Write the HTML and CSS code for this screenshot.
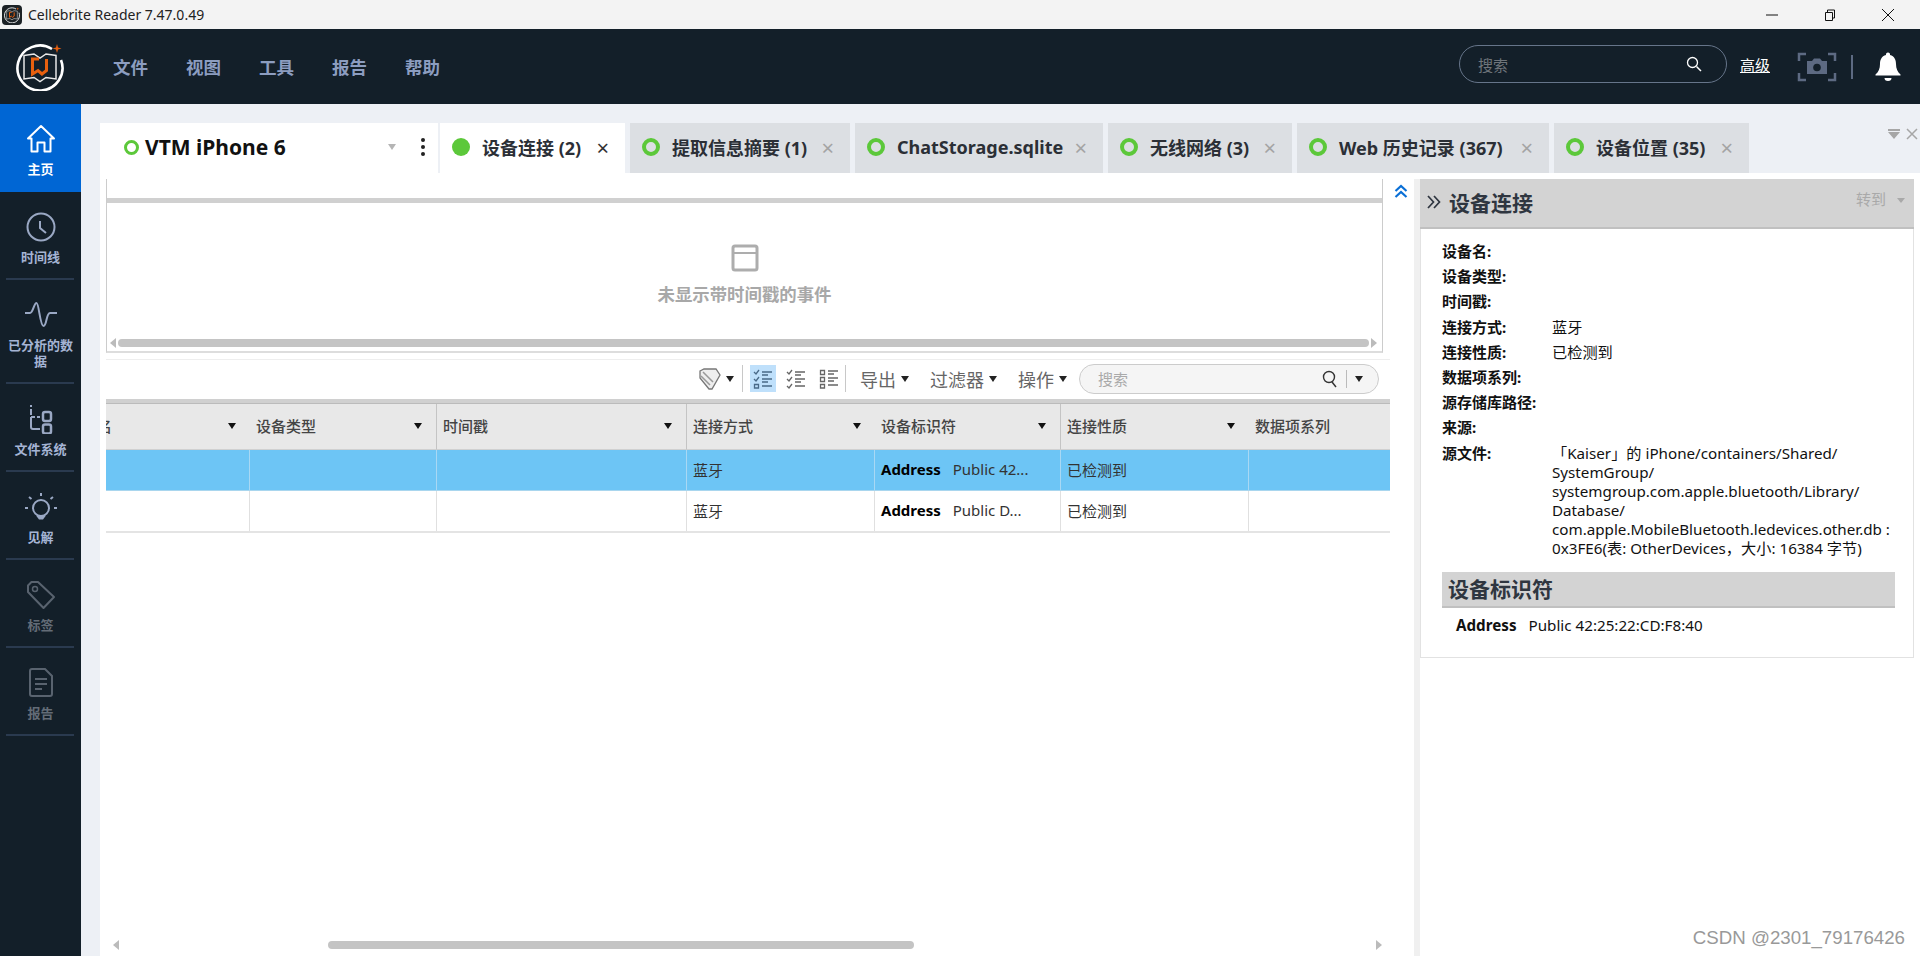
FILE: index.html
```html
<!DOCTYPE html>
<html lang="zh-CN">
<head>
  <meta charset="UTF-8">
  <title>Cellebrite Reader 7.47.0.49</title>
  <link rel="stylesheet" href="styles.css">
</head>
<body>
  <svg class="defs" width="0" height="0">
    <symbol id="logo" viewBox="0 0 48 48">
      <path d="M36 6A22.5 22.5 0 1 0 45 17" fill="none" stroke="#fff" stroke-width="2.6"/>
      <path d="M8 12.500 18 11 24 15 30 11 40 12.500V36L30 34.500 24 38.500 18 34.500 8 36Z" fill="none" stroke="#e8e8e8" stroke-width="1.500"/>
      <path d="M23 16H16.500V31L22 27.500 26 31 30.500 27.500V16" fill="none" stroke="#e8600f" stroke-width="3"/>
      <path d="M41 1l1 3.500 3.500 1-3.500 1-1 3.500-1-3.500-3.500-1 3.500-1Z" fill="#e8600f"/>
    </symbol>
    <symbol id="view-lines" viewBox="0 0 20 20">
      <path d="M1 3L3 5 6 1M1 10L3 12 6 8M9 3H19M9 6H15M9 10H19M9 13H15M9 17H19" fill="none" stroke="#4a6a88" stroke-width="1.300"/>
      <path d="M1.500 15.500H5.500V19H1.500Z" fill="none" stroke="#4a6a88" stroke-width="1.300"/>
    </symbol>
  </svg>

  <header class="titlebar">
    <div class="app-icon"><svg width="16" height="16"><use href="#logo"/></svg></div>
    <span class="app-title">Cellebrite Reader 7.47.0.49</span>
    <div class="win-controls">
      <svg width="14" height="14" viewBox="0 0 14 14"><path d="M1 7H13" stroke="#111" stroke-width="1"/></svg>
      <svg width="14" height="14" viewBox="0 0 14 14"><path d="M2.500 4.500H9.500V12.500H2.500Z M4.500 4.500V2H11.500V10H9.500" fill="none" stroke="#111" stroke-width="1"/></svg>
      <svg width="14" height="14" viewBox="0 0 14 14"><path d="M1 1L13 13M13 1L1 13" stroke="#111" stroke-width="1"/></svg>
    </div>
  </header>

  <nav class="topbar">
    <svg class="top-logo" width="48" height="48"><use href="#logo"/></svg>
    <ul class="menu">
      <li>文件</li>
      <li>视图</li>
      <li>工具</li>
      <li>报告</li>
      <li>帮助</li>
    </ul>
    <div class="top-search">
      <span class="top-search-text">搜索</span>
      <svg width="18" height="18" viewBox="0 0 18 18"><circle cx="7.500" cy="7.500" r="5" fill="none" stroke="#fff" stroke-width="1.300"/><path d="M11.500 11.500L16 16" stroke="#fff" stroke-width="1.500"/></svg>
    </div>
    <a class="advanced">高级</a>
    <svg class="camera" width="40" height="30" viewBox="0 0 40 30">
      <path d="M9 2H2V9M31 2H38V9M9 28H2V21M31 28H38V21" fill="none" stroke="#5d6a82" stroke-width="2.500"/>
      <path d="M10 9H15L17 6.500H23L25 9H30V22H10Z" fill="#5d6a82"/>
      <circle cx="20" cy="15.500" r="3.800" fill="#131f29"/>
    </svg>
    <span class="top-divider"></span>
    <svg class="bell" width="26" height="30" viewBox="0 0 26 30">
      <path d="M13 0.500a2 2 0 0 1 2 2.500c4.500 1.200 6 5 6 9 0 4.500 1.500 8 4.500 10.500v1H.5v-1C3.500 20 5 16.500 5 12c0-4 1.500-7.800 6-9a2 2 0 0 1 2-2.500Z" fill="#fff"/>
      <path d="M9.500 26h7a3.500 3 0 0 1-7 0Z" fill="#fff"/>
    </svg>
  </nav>

  <div class="app-body">
    <aside class="sidebar">
      <div class="side-item active">
        <svg width="30" height="30" viewBox="0 0 30 30"><path d="M2 14.500L15 2 28 14.500H24.500V27.500H18.500V18.500H11.500V27.500H5.500V14.500Z" fill="none" stroke="#fff" stroke-width="2" stroke-linejoin="round"/></svg>
        <span>主页</span>
      </div>
      <div class="side-item">
        <svg width="30" height="30" viewBox="0 0 30 30"><circle cx="15" cy="15" r="13.500" fill="none" stroke="#9aa8c4" stroke-width="2"/><path d="M14 9V16L20 21" fill="none" stroke="#9aa8c4" stroke-width="2"/></svg>
        <span>时间线</span>
      </div>
      <div class="side-item">
        <svg width="34" height="30" viewBox="0 0 34 30"><path d="M1 13H6C9 13 10 3 12.500 3S16 26 19.500 26 22 13 26 13H33" fill="none" stroke="#9aa8c4" stroke-width="2"/></svg>
        <span>已分析的数据</span>
      </div>
      <div class="side-item">
        <svg width="30" height="30" viewBox="0 0 30 30"><path d="M5 1V3M5 5V11M5 13H9M11 13H14M5 13V23Q5 25 7 25H14" fill="none" stroke="#9aa8c4" stroke-width="2"/><rect x="17" y="8" width="8" height="9" rx="2" fill="none" stroke="#9aa8c4" stroke-width="2.500"/><rect x="17" y="20.500" width="8" height="9" rx="2" fill="none" stroke="#9aa8c4" stroke-width="2.500"/></svg>
        <span>文件系统</span>
      </div>
      <div class="side-item">
        <svg width="34" height="30" viewBox="0 0 34 30"><circle cx="17" cy="16" r="8" fill="none" stroke="#9aa8c4" stroke-width="2"/><path d="M12 23.500H22L19 27.500H15Z" fill="#9aa8c4"/><path d="M17 1V4M5 5L7.500 7M29 5L26.500 7M1 16H4M30 16H33" stroke="#9aa8c4" stroke-width="2"/></svg>
        <span>见解</span>
      </div>
      <div class="side-item off">
        <svg width="30" height="30" viewBox="0 0 30 30"><path d="M2 5.500L5.500 2H12L28 17 17.500 28 2 12Z" fill="none" stroke="#59636f" stroke-width="2" stroke-linejoin="round"/><circle cx="9" cy="9" r="2.500" fill="none" stroke="#59636f" stroke-width="1.500"/></svg>
        <span>标签</span>
      </div>
      <div class="side-item off">
        <svg width="30" height="30" viewBox="0 0 30 30"><path d="M4 3Q4 1 6 1H19L26 8V26Q26 28 24 28H6Q4 28 4 26Z" fill="none" stroke="#59636f" stroke-width="2"/><path d="M9 11H21M9 16H21M9 21H16" stroke="#59636f" stroke-width="2"/></svg>
        <span>报告</span>
      </div>
    </aside>

    <main class="content">
      <div class="tabs">
        <div class="device-tab">
          <span class="ring small"></span>
          <span class="device-name">VTM iPhone 6</span>
          <span class="device-caret"></span>
          <span class="kebab"><i></i><i></i><i></i></span>
        </div>
        <div class="tab current tab-a"><span class="dot"></span><span class="tab-text">设备连接 (2)</span><span class="tab-x">×</span></div>
        <div class="tab tab-b"><span class="ring"></span><span class="tab-text">提取信息摘要 (1)</span><span class="tab-x">×</span></div>
        <div class="tab tab-c"><span class="ring"></span><span class="tab-text">ChatStorage.sqlite</span><span class="tab-x">×</span></div>
        <div class="tab tab-d"><span class="ring"></span><span class="tab-text">无线网络 (3)</span><span class="tab-x">×</span></div>
        <div class="tab tab-e"><span class="ring"></span><span class="tab-text">Web 历史记录 (367)</span><span class="tab-x">×</span></div>
        <div class="tab tab-f"><span class="ring"></span><span class="tab-text">设备位置 (35)</span><span class="tab-x">×</span></div>
        <div class="tabs-tools">
          <svg width="14" height="14" viewBox="0 0 14 14"><path d="M1 2H13V4H1ZM1 5H13L7 12Z" fill="#a6a6a6"/></svg>
          <svg width="12" height="12" viewBox="0 0 12 12"><path d="M1 1L11 11M11 1L1 11" stroke="#a6a6a6" stroke-width="1.500"/></svg>
        </div>
      </div>

      <div class="workspace">
        <section class="left-pane">
          <div class="timeline-row">
            <div class="timeline">
              <div class="timeline-bar"></div>
              <div class="timeline-empty">
                <svg width="28" height="28" viewBox="0 0 28 28"><rect x="2" y="2" width="24" height="24" rx="2" fill="none" stroke="#adadad" stroke-width="3"/><path d="M2 9H26" stroke="#adadad" stroke-width="2"/></svg>
                <span>未显示带时间戳的事件</span>
              </div>
              <div class="timeline-scroll">
                <span class="arrow-left"></span>
                <span class="timeline-thumb"></span>
                <span class="arrow-right"></span>
              </div>
            </div>
            <div class="collapse">
              <svg width="14" height="15" viewBox="0 0 14 15"><path d="M1.500 7L7 2 12.500 7M1.500 13L7 8 12.500 13" fill="none" stroke="#0a6fd6" stroke-width="2.200"/></svg>
            </div>
          </div>

          <div class="toolbar">
            <svg class="tag-icon" width="22" height="24" viewBox="0 0 22 24"><path d="M1 4L5 2H17L21 8 13 22 10 22 1 11Z" fill="#eee" stroke="#777" stroke-width="1.300"/><path d="M4 5L14 15M2 9L11 18" stroke="#999" stroke-width="1.500"/></svg>
            <span class="caret"></span>
            <span class="tool-sep first"></span>
            <span class="view-btn on">
              <svg width="20" height="20" viewBox="0 0 20 20"><use href="#view-lines"/></svg>
            </span>
            <span class="view-btn">
              <svg width="20" height="20" viewBox="0 0 20 20"><path d="M1 3L3 5 6 1M1 10L3 12 6 8M1 17L3 19 6 15M9 3H19M9 6H15M9 10H19M9 13H15M9 17H19" fill="none" stroke="#666" stroke-width="1.300"/></svg>
            </span>
            <span class="view-btn">
              <svg width="20" height="20" viewBox="0 0 20 20"><path d="M1.500 1.500H5.500V5.500H1.500ZM1.500 8.500H5.500V12.500H1.500ZM1.500 15.500H5.500V19H1.500ZM9 2H19M9 5H15M9 9H19M9 12H15M9 16H19" fill="none" stroke="#666" stroke-width="1.300"/></svg>
            </span>
            <span class="tool-sep last"></span>
            <span class="tool-item">导出<span class="caret"></span></span>
            <span class="tool-item">过滤器<span class="caret"></span></span>
            <span class="tool-item">操作<span class="caret"></span></span>
            <div class="list-search">
              <span class="list-search-text">搜索</span>
              <svg width="16" height="18" viewBox="0 0 16 18"><circle cx="7" cy="7" r="5.500" fill="none" stroke="#333" stroke-width="1.400"/><path d="M10 12L14 17" stroke="#333" stroke-width="1.500"/></svg>
              <span class="list-search-sep"></span>
              <span class="caret"></span>
            </div>
          </div>

          <div class="grid-wrap">
            <div class="grid-cap"></div>
            <div class="grid">
              <div class="hd"><span>设备名</span><b></b></div>
              <div class="hd sep"><span>设备类型</span><b></b></div>
              <div class="hd sep"><span>时间戳</span><b></b></div>
              <div class="hd"><span>连接方式</span><b></b></div>
              <div class="hd sep"><span>设备标识符</span><b></b></div>
              <div class="hd"><span>连接性质</span><b></b></div>
              <div class="hd"><span>数据项系列</span></div>

              <div class="td sel"></div>
              <div class="td sel"></div>
              <div class="td sel"></div>
              <div class="td sel">蓝牙</div>
              <div class="td sel"><strong>Address</strong>Public 42...</div>
              <div class="td sel">已检测到</div>
              <div class="td sel"></div>

              <div class="td"></div>
              <div class="td"></div>
              <div class="td"></div>
              <div class="td">蓝牙</div>
              <div class="td"><strong>Address</strong>Public D...</div>
              <div class="td">已检测到</div>
              <div class="td"></div>
            </div>
          </div>

          <div class="bottom-scroll">
            <span class="arrow-left"></span>
            <span class="bottom-thumb"></span>
            <span class="arrow-right"></span>
          </div>
        </section>

        <div class="splitter"></div>

        <aside class="details">
          <div class="details-head">
            <svg width="14" height="14" viewBox="0 0 14 14"><path d="M1 1L6.500 7 1 13M7 1L12.500 7 7 13" fill="none" stroke="#2f3640" stroke-width="1.700"/></svg>
            <h2>设备连接</h2>
            <span class="goto">转到</span>
            <span class="goto-caret"></span>
          </div>
          <div class="details-body">
            <div class="field"><label>设备名:</label><span></span></div>
            <div class="field"><label>设备类型:</label><span></span></div>
            <div class="field"><label>时间戳:</label><span></span></div>
            <div class="field"><label>连接方式:</label><span>蓝牙</span></div>
            <div class="field"><label>连接性质:</label><span>已检测到</span></div>
            <div class="field"><label>数据项系列:</label><span></span></div>
            <div class="field"><label>源存储库路径:</label><span></span></div>
            <div class="field"><label>来源:</label><span></span></div>
            <div class="field"><label>源文件:</label><span>「Kaiser」的 iPhone/containers/Shared/<br>SystemGroup/<br>systemgroup.com.apple.bluetooth/Library/<br>Database/<br>com.apple.MobileBluetooth.ledevices.other.db :<br>0x3FE6(表: OtherDevices，大小: 16384 字节)</span></div>
            <h3>设备标识符</h3>
            <div class="address"><strong>Address</strong><span>Public 42:25:22:CD:F8:40</span></div>
          </div>
        </aside>
      </div>
    </main>
  </div>

  <div class="watermark">CSDN @2301_79176426</div>
</body>
</html>
```

FILE: styles.css
```css
* {
  box-sizing: border-box;
}
html, body {
  margin: 0;
  height: 956px;
  overflow: hidden;
}
body {
  position: relative;
  font-family: "Noto Sans", "Noto Sans CJK SC", sans-serif;
  font-size: 15px;
  color: #222;
  background: #fff;
  display: flex;
  flex-direction: column;
}
.defs {
  position: absolute;
}

/* title bar */
.titlebar {
  height: 29px;
  flex: none;
  background: #f3f3f3;
  display: flex;
  align-items: center;
  padding-left: 2px;
}
.app-icon {
  width: 20px;
  height: 20px;
  border-radius: 4px;
  background: #1c2226;
  display: flex;
  align-items: center;
  justify-content: center;
}
.app-title {
  margin-left: 6px;
  font-size: 14px;
  color: #222;
}
.win-controls {
  margin-left: auto;
  display: flex;
  gap: 44px;
  padding-right: 25px;
}

/* top bar */
.topbar {
  height: 75px;
  flex: none;
  background: #131f29;
  display: flex;
  align-items: center;
  padding-left: 16px;
}
.top-logo {
  flex: none;
}
.menu {
  list-style: none;
  margin: 0 0 0 49px;
  padding: 0;
  display: flex;
  gap: 38px;
  font-size: 17.500px;
  font-weight: 700;
  color: #8c9dc0;
}
.top-search {
  margin-left: auto;
  margin-bottom: 5px;
  width: 268px;
  height: 38px;
  border: 1px solid #66758a;
  border-radius: 19px;
  display: flex;
  align-items: center;
  justify-content: space-between;
  padding: 0 23px 0 18px;
}
.top-search-text {
  color: #6f757b;
  font-size: 15px;
}
.advanced {
  margin-left: 13px;
  margin-bottom: 5px;
  color: #fff;
  font-size: 15px;
  text-decoration: underline;
  text-underline-offset: 1px;
}
.camera {
  margin-left: 27px;
}
.top-divider {
  width: 2px;
  height: 24px;
  margin-left: 14px;
  background: #5d6a82;
}
.bell {
  margin-left: 22px;
  margin-right: 19px;
}

/* body layout */
.app-body {
  flex: 1;
  min-height: 0;
  display: flex;
}
.sidebar {
  width: 81px;
  flex: none;
  background: #131f29;
  display: flex;
  flex-direction: column;
}
.side-item {
  position: relative;
  min-height: 88px;
  padding: 20px 6px 15px;
  display: flex;
  flex-direction: column;
  align-items: center;
  color: #a5b4d4;
  font-size: 13px;
  font-weight: 700;
  line-height: 16px;
  text-align: center;
}
.side-item svg {
  flex: none;
  margin-bottom: 7px;
}
.side-item::after {
  content: "";
  position: absolute;
  left: 6px;
  right: 7px;
  bottom: 0;
  height: 2px;
  background: #2a3a4f;
}
.side-item.active {
  background: #0066d4;
  color: #fff;
}
.side-item.active::after {
  display: none;
}
.side-item.off {
  color: #636c77;
}

/* tabs */
.content {
  flex: 1;
  min-width: 0;
  background: #edf0f5;
  padding: 19px 0 0 19px;
  display: flex;
  flex-direction: column;
}
.tabs {
  height: 50px;
  flex: none;
  display: flex;
  gap: 5px;
  position: relative;
}
.device-tab {
  width: 340px;
  margin-right: -5px;
  background: #fff;
  border-right: 2px solid #edf0f5;
  display: flex;
  align-items: center;
  padding: 0 0 2px 24px;
}
.ring {
  width: 18px;
  height: 18px;
  border: 4px solid #5cc83a;
  border-radius: 50%;
  flex: none;
}
.ring.small {
  width: 15px;
  height: 15px;
  border-width: 3.500px;
}
.dot {
  width: 18px;
  height: 18px;
  background: #5cc83a;
  border-radius: 50%;
  flex: none;
}
.device-name {
  margin-left: 6px;
  font-size: 21px;
  font-weight: 700;
  color: #111;
}
.device-caret {
  margin-left: auto;
  border-left: 4px solid transparent;
  border-right: 4px solid transparent;
  border-top: 6px solid #b5b5b5;
}
.kebab {
  margin: 0 13px 0 25px;
  display: flex;
  flex-direction: column;
  gap: 3px;
}
.kebab i {
  width: 4px;
  height: 4px;
  border-radius: 50%;
  background: #222;
}
.tab {
  background: #dcdfe3;
  display: flex;
  align-items: center;
  padding: 0 0 2px 12px;
  font-size: 18px;
  font-weight: 700;
  color: #2b2f36;
  white-space: nowrap;
}
.tab.current {
  background: #fff;
}
.tab-a { width: 185px; }
.tab-b { width: 220px; }
.tab-c { width: 248px; }
.tab-d { width: 184px; }
.tab-e { width: 252px; }
.tab-f { width: 195px; }
.tab-text {
  margin-left: 12px;
}
.tab-x {
  margin-left: auto;
  margin-right: 16px;
  font-size: 22px;
  font-weight: 400;
  line-height: 1;
  color: #a4a4a4;
}
.tab.current .tab-x {
  color: #333;
}
.tabs-tools {
  position: absolute;
  right: 2px;
  top: 4px;
  display: flex;
  align-items: center;
  gap: 5px;
}

/* workspace */
.workspace {
  flex: 1;
  min-height: 0;
  background: #fff;
  padding-top: 6px;
  display: flex;
}
.left-pane {
  width: 1314px;
  flex: none;
  padding-left: 6px;
  display: flex;
  flex-direction: column;
}
.timeline-row {
  height: 174px;
  flex: none;
  display: flex;
}
.timeline {
  width: 1280px;
  border-left: 1px solid #ccc;
  border-right: 1px solid #ccc;
  border-bottom: 2px solid #ddd;
  display: flex;
  flex-direction: column;
  padding-top: 19px;
}
.timeline-bar {
  height: 5px;
  flex: none;
  background: #d0d0d0;
}
.timeline-empty {
  flex: 1;
  display: flex;
  flex-direction: column;
  align-items: center;
  gap: 10px;
  padding-top: 41px;
  font-size: 17.400px;
  font-weight: 700;
  line-height: 24px;
  color: #a8a8a8;
}
.timeline-scroll {
  height: 8px;
  margin-bottom: 4px;
  flex: none;
  display: flex;
  align-items: center;
  padding: 0 5px 0 3px;
}
.timeline-thumb {
  flex: 1;
  height: 8px;
  margin: 0 2px;
  background: #c4c4c4;
  border-radius: 4px;
}
.arrow-left {
  border-top: 5px solid transparent;
  border-bottom: 5px solid transparent;
  border-right: 6px solid #bbb;
}
.arrow-right {
  border-top: 5px solid transparent;
  border-bottom: 5px solid transparent;
  border-left: 6px solid #bbb;
}
.collapse {
  flex: 1;
  display: flex;
  justify-content: center;
  padding: 5px 6px 0 0;
}
.collapse svg {
  margin-left: 11px;
}

/* toolbar */
.toolbar {
  height: 40px;
  flex: none;
  width: 1284px;
  margin-top: 6px;
  border-top: 1px solid #eee;
  padding: 0 11px 2px 0;
  display: flex;
  align-items: center;
  justify-content: flex-end;
  color: #666;
  font-size: 18px;
}
.caret {
  display: inline-block;
  width: 0;
  height: 0;
  border-left: 4.500px solid transparent;
  border-right: 4.500px solid transparent;
  border-top: 6px solid #222;
}
.tag-icon {
  margin-right: 5px;
}
.tool-sep {
  width: 1px;
  height: 27px;
  background: #c8c8c8;
}
.tool-sep.first {
  margin: 0 7px 0 8px;
}
.tool-sep.last {
  margin: 0 14px 0 -4px;
}
.view-btn {
  width: 26px;
  height: 27px;
  margin-right: 7px;
  display: flex;
  align-items: center;
  justify-content: center;
}
.view-btn.on {
  background: #bfe0fb;
}
.tool-item {
  display: flex;
  align-items: center;
  gap: 5px;
  margin-right: 21px;
}
.tool-item:last-of-type {
  margin-right: 12px;
}
.list-search {
  width: 300px;
  height: 30px;
  background: #f5f5f5;
  border: 1px solid #ccc;
  border-radius: 15px;
  display: flex;
  align-items: center;
  padding: 0 15px 0 18px;
}
.list-search-text {
  margin-right: auto;
  font-size: 15px;
  color: #aaa;
}
.list-search-sep {
  width: 1px;
  height: 18px;
  margin: 0 8px;
  background: #bbb;
}

/* data grid */
.grid-wrap {
  width: 1284px;
  flex: none;
  overflow: hidden;
  border-bottom: 2px solid #e4e4e4;
}
.grid-cap {
  height: 5px;
  background: #d0d0d0;
  border-bottom: 1px solid #bbb;
}
.grid {
  margin-left: -45px;
  width: 1376px;
  display: grid;
  grid-template-columns: 189px 187px 250px 188px 186px 188px 188px;
  grid-template-rows: 46px 41px 40px;
}
.hd {
  background: #e8e8e8;
  border-bottom: 1px solid #d0d0d0;
  display: flex;
  align-items: center;
  justify-content: space-between;
  padding: 0 14px 2px 6px;
  color: #444;
  font-weight: 500;
  white-space: nowrap;
}
.hd.sep {
  border-right: 1px solid #c4c4c4;
}
.hd b {
  border-left: 4.500px solid transparent;
  border-right: 4.500px solid transparent;
  border-top: 6px solid #111;
}
.td {
  display: flex;
  align-items: center;
  padding: 0 0 2px 6px;
  border-right: 1px solid #e0e0e0;
  color: #333;
  white-space: nowrap;
}
.td.sel {
  background: #6dc5f5;
  border-right-color: #a8d8f4;
  border-bottom: 1px solid #a9d6ee;
}
.td strong {
  margin-right: 12px;
  color: #000;
}

/* details panel */
.splitter {
  width: 6px;
  flex: none;
  background: #f0f0f0;
}
.details {
  width: 494px;
  flex: none;
}
.details-head {
  height: 50px;
  background: #d3d3d3;
  border-bottom: 2px solid #c0c0c0;
  display: flex;
  align-items: center;
  padding: 0 9px 2px 7px;
}
.details-head h2 {
  margin: 0 0 0 8px;
  font-size: 21px;
  font-weight: 700;
  color: #2f3640;
}
.goto {
  margin-left: auto;
  margin-top: -8px;
  color: #a9a9a9;
}
.goto-caret {
  margin: -4px 0 0 11px;
  border-left: 4px solid transparent;
  border-right: 4px solid transparent;
  border-top: 5px solid #a9a9a9;
}
.details-body {
  border: 1px solid #e2e2e2;
  border-top: none;
  height: 429px;
  padding: 10px 18px 0 21px;
  font-size: 15.200px;
  line-height: 19px;
  color: #111;
}
.field {
  display: flex;
  padding: 3.100px 0;
}
.field label {
  width: 110px;
  flex: none;
  font-size: 15px;
  font-weight: 700;
}
.details-body h3 {
  margin: 11px 0 0;
  height: 36px;
  padding-left: 6px;
  background: #d3d3d3;
  border-bottom: 2px solid #c0c0c0;
  font-size: 21px;
  font-weight: 700;
  line-height: 34px;
  color: #2f3640;
}
.address {
  margin-top: 8px;
  padding-left: 14px;
  display: flex;
  gap: 12px;
}

.watermark {
  position: absolute;
  right: 15px;
  bottom: 7px;
  font-family: "Liberation Sans", sans-serif;
  font-size: 18.700px;
  color: #999;
}

.bottom-scroll {
  margin-top: auto;
  height: 22px;
  flex: none;
  width: 1284px;
  padding: 0 8px 0 7px;
  display: flex;
  align-items: center;
}
.bottom-thumb {
  width: 586px;
  height: 8px;
  margin-left: 209px;
  margin-right: auto;
  background: #c4c4c4;
  border-radius: 4px;
}
```
